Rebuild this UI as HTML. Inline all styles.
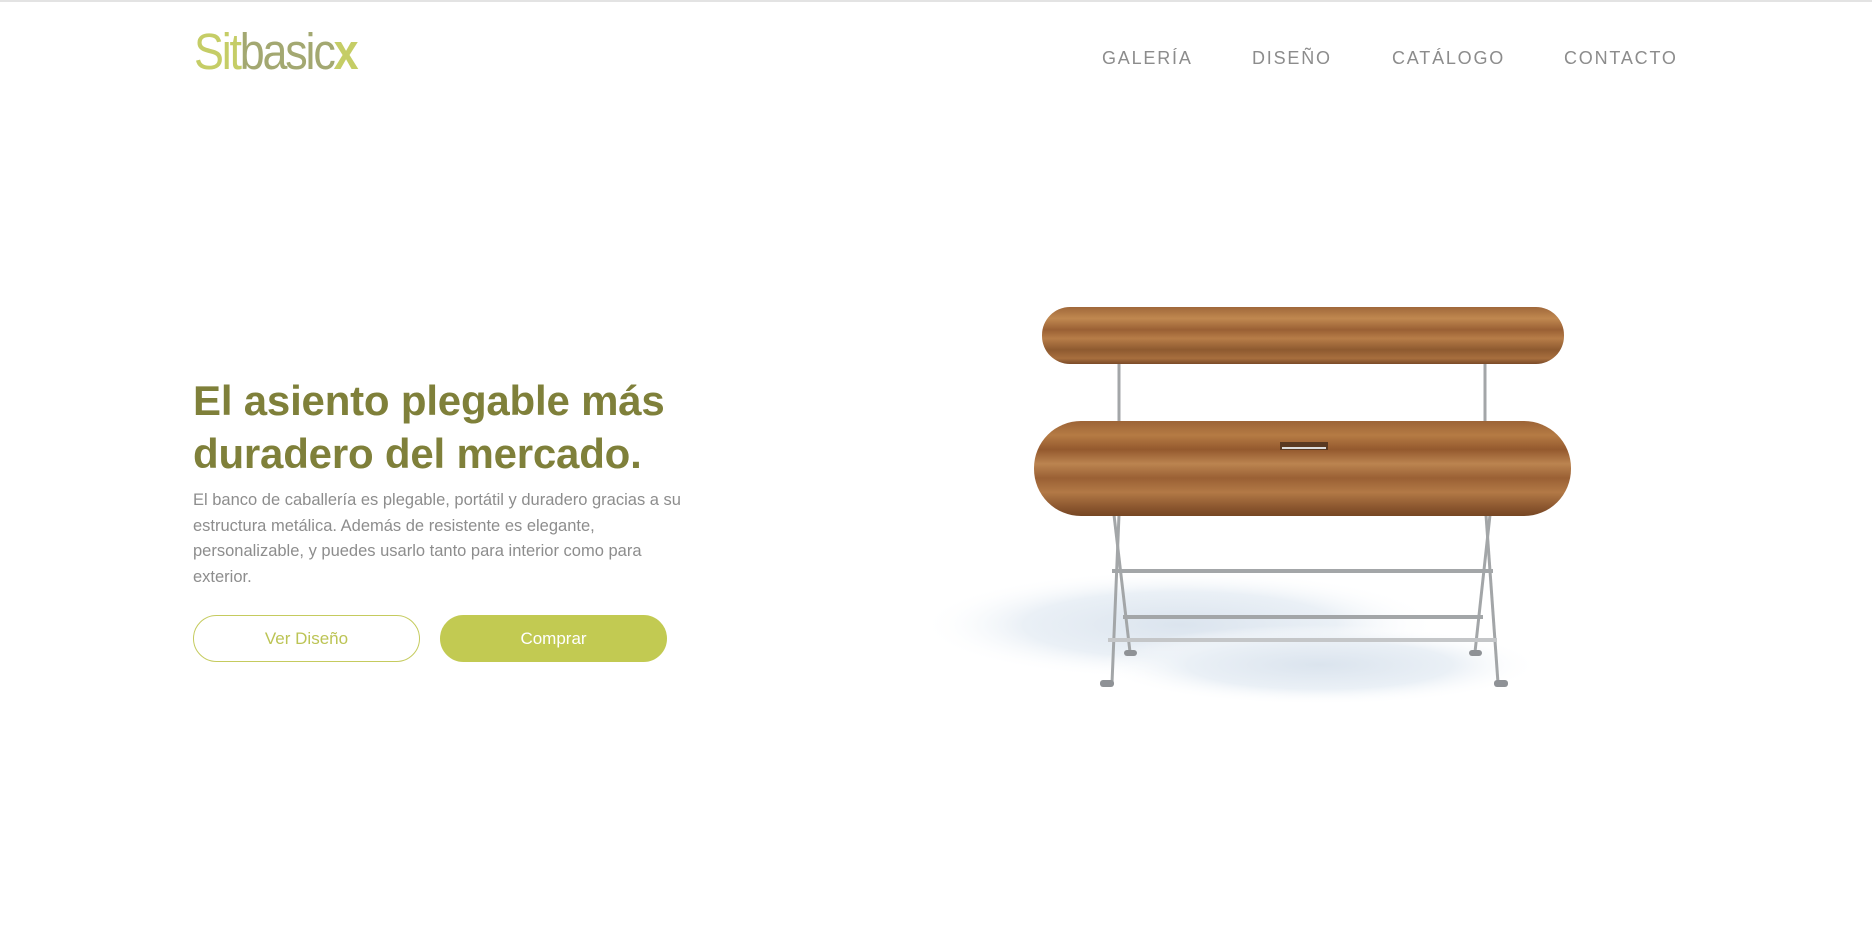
<!DOCTYPE html>
<html><head><meta charset="utf-8"><style>
*{margin:0;padding:0;box-sizing:border-box}
html,body{width:1872px;height:937px;background:#fff;overflow:hidden;font-family:"Liberation Sans",sans-serif}
.topline{position:absolute;left:0;top:0;width:1872px;height:2px;background:#e3e3e3}
.logo{position:absolute;left:194px;top:22px;font-size:51px;letter-spacing:-2.5px;line-height:60px;white-space:nowrap;transform:scaleX(0.88);transform-origin:0 0}
.logo .a{color:#c5cd66}
.logo .b{color:#a3a871}
.logo .c{color:#c5cd66;font-weight:bold}
.nav a{position:absolute;top:47px;font-size:18px;letter-spacing:1.8px;color:#8c8c8c;text-decoration:none;line-height:22px}
h1{position:absolute;left:193px;top:374px;font-size:42px;line-height:53px;color:#7f803a;font-weight:bold;letter-spacing:-0.2px;white-space:nowrap}
p{position:absolute;left:193px;top:488px;width:500px;font-size:16.5px;line-height:25.5px;color:#8d8d8d}
.btn{position:absolute;top:615px;width:227px;height:47px;border-radius:24px;font-size:17px;text-align:center;line-height:45px}
.b1{left:193px;border:1.5px solid #c5cb5e;color:#bcc455}
.b2{left:440px;background:#c2ca52;color:#fff;border:1.5px solid #c2ca52}
svg{position:absolute;left:0;top:0}
</style></head><body>
<div class="topline"></div>
<div class="logo"><span class="a">Sit</span><span class="b">basic</span><span class="c">x</span></div>
<div class="nav">
<a style="left:1102px">GALERÍA</a>
<a style="left:1252px">DISEÑO</a>
<a style="left:1392px">CATÁLOGO</a>
<a style="left:1564px">CONTACTO</a>
</div>
<h1>El asiento plegable más<br>duradero del mercado.</h1>
<p>El banco de caballería es plegable, portátil y duradero gracias a su estructura metálica. Además de resistente es elegante, personalizable, y puedes usarlo tanto para interior como para exterior.</p>
<div class="btn b1">Ver Diseño</div>
<div class="btn b2">Comprar</div>
<svg width="1872" height="937" viewBox="0 0 1872 937">
<defs>
<radialGradient id="sh" cx="0.5" cy="0.5" r="0.5">
<stop offset="0" stop-color="#dbe4ee"/><stop offset="0.6" stop-color="#eaf0f6"/><stop offset="1" stop-color="#fff" stop-opacity="0"/>
</radialGradient>
<linearGradient id="w1" x1="0" y1="0" x2="0" y2="1">
<stop offset="0" stop-color="#a0683a"/><stop offset="0.2" stop-color="#c08850"/><stop offset="0.4" stop-color="#9a6034"/><stop offset="0.55" stop-color="#b77d48"/><stop offset="0.75" stop-color="#8e5a30"/><stop offset="0.9" stop-color="#a86f3e"/><stop offset="1" stop-color="#7a4a28"/>
</linearGradient>
<linearGradient id="w2" x1="0" y1="0" x2="0" y2="1">
<stop offset="0" stop-color="#9c6336"/><stop offset="0.15" stop-color="#b57b44"/><stop offset="0.3" stop-color="#94592e"/><stop offset="0.45" stop-color="#bb8450"/><stop offset="0.6" stop-color="#9a6034"/><stop offset="0.75" stop-color="#b27946"/><stop offset="0.9" stop-color="#8d5830"/><stop offset="1" stop-color="#754624"/>
</linearGradient>
</defs>
<ellipse cx="1180" cy="625" rx="260" ry="55" fill="url(#sh)"/>
<ellipse cx="1320" cy="665" rx="220" ry="40" fill="url(#sh)"/>
<g stroke="#a3a6a8" stroke-width="3" fill="none">
<line x1="1119" y1="364" x2="1119" y2="422"/>
<line x1="1485" y1="364" x2="1485" y2="422"/>
<line x1="1119" y1="515" x2="1112" y2="683"/>
<line x1="1114" y1="515" x2="1130" y2="652"/>
<line x1="1486" y1="515" x2="1498" y2="683"/>
<line x1="1490" y1="515" x2="1475" y2="652"/>
<line x1="1112" y1="571" x2="1493" y2="571" stroke-width="4"/>
<line x1="1123" y1="617" x2="1483" y2="617" stroke-width="4"/>
<line x1="1108" y1="640" x2="1497" y2="640" stroke="#c4c6c8" stroke-width="4"/>
</g>
<g fill="#8f9296">
<rect x="1100" y="680" width="14" height="7" rx="3"/><rect x="1494" y="680" width="14" height="7" rx="3"/>
<rect x="1124" y="650" width="13" height="6" rx="3"/><rect x="1469" y="650" width="13" height="6" rx="3"/>
</g>
<rect x="1042" y="307" width="522" height="57" rx="28" fill="url(#w1)"/>
<rect x="1034" y="421" width="537" height="95" rx="47" fill="url(#w2)"/>
<rect x="1280" y="442" width="48" height="8" fill="#5a3a22"/>
<rect x="1282" y="447" width="44" height="2" fill="#ddd"/>
</svg>
</body></html>
